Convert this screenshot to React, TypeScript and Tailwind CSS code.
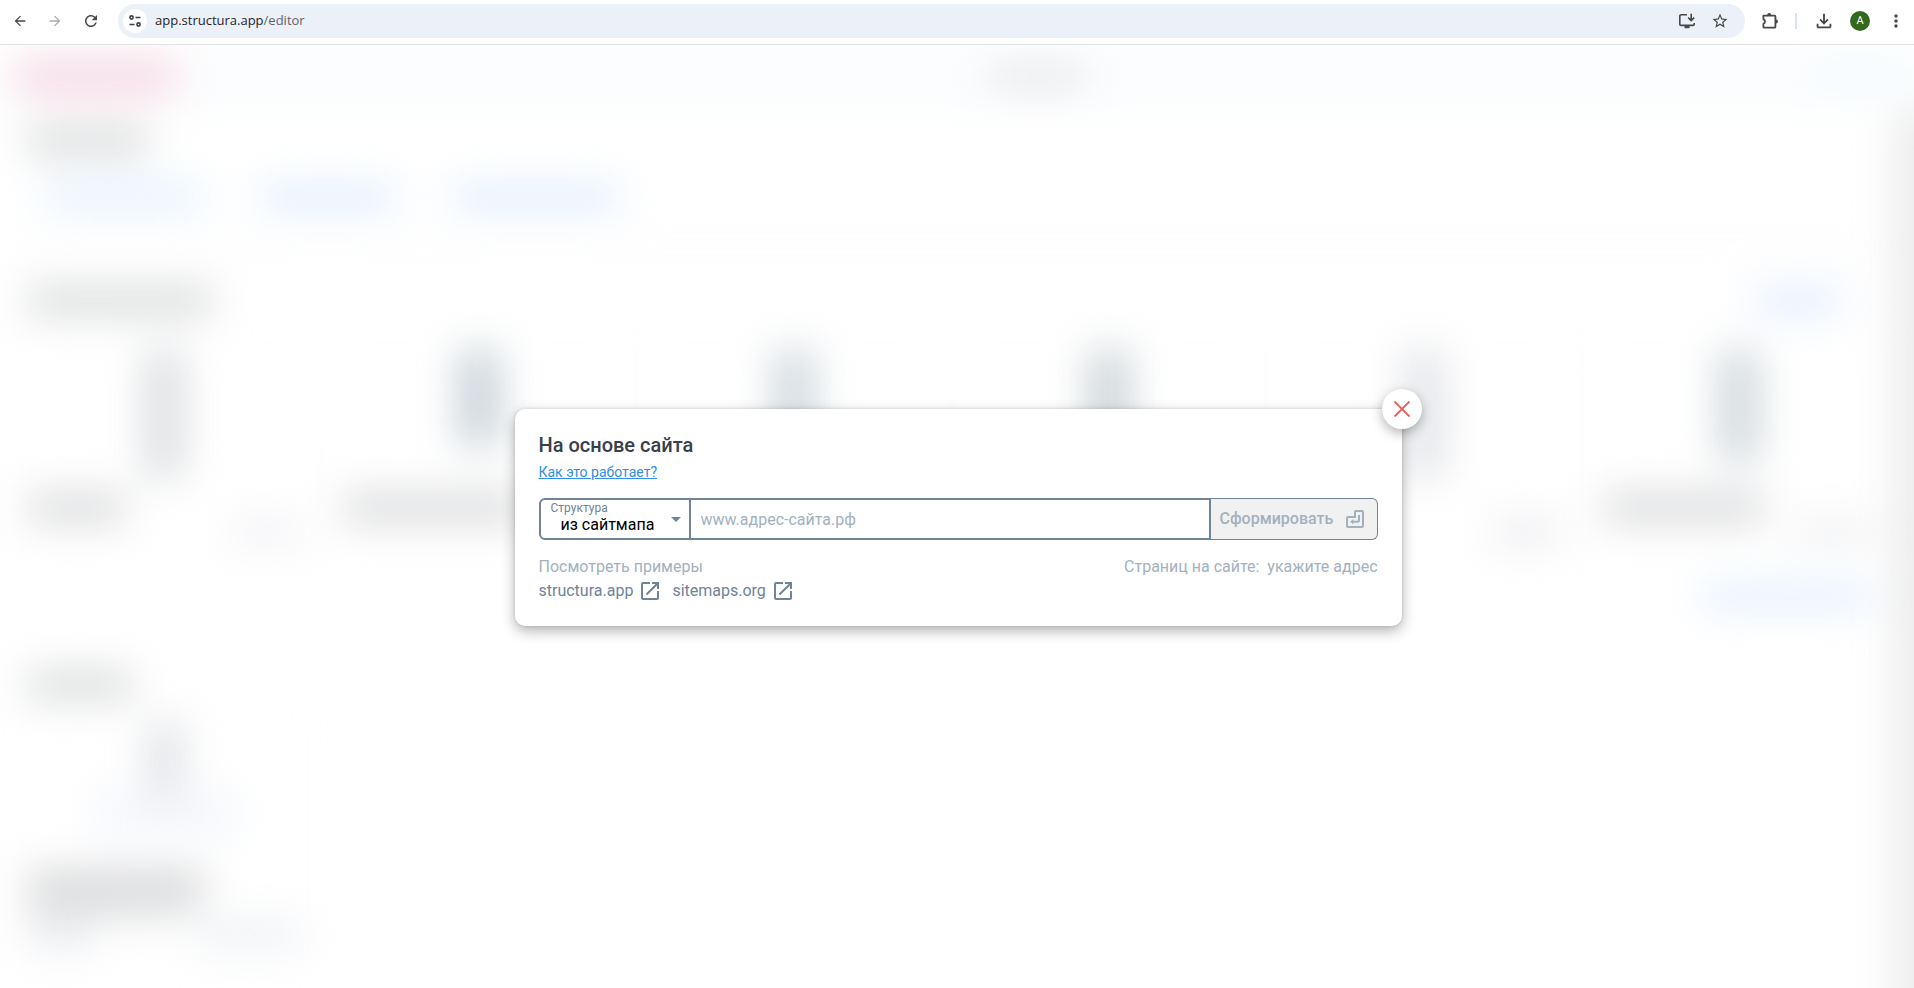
import React, { useState } from 'react';
import {
  MdArrowBack,
  MdArrowForward,
  MdMoreVert,
  MdOpenInNew,
  MdOutlineFileDownload,
  MdRefresh,
  MdStarBorder,
} from 'react-icons/md';

const EXAMPLES = [
  { name: 'structura.app', url: '#structura' },
  { name: 'sitemaps.org', url: '#sitemaps' },
];

// Project previews behind the dialog: tree, title and date placeholders
const PROJECTS = [
  { tree: 'h-32 bg-[#dcdee1]', title: 'w-24 bg-[#d6d7d9]', date: 'w-16 bg-[#ebecf1]' },
  { tree: 'h-24 bg-[#c6cfd5]', title: 'w-44 bg-[#d6d7d9]', date: 'w-16 bg-[#ebecf1]' },
  { tree: 'h-32 bg-[#cfd7dc]', title: 'w-32 bg-[#d6d7d9]', date: 'w-16 bg-[#ebecf1]' },
  { tree: 'h-32 bg-[#cbd2d6]', title: 'w-32 bg-[#d6d7d9]', date: 'w-16 bg-[#ebecf1]' },
  { tree: 'h-32 bg-[#e2e4e8]', title: 'w-24 bg-[#ffffff]', date: 'w-16 bg-[#e5e6ea]' },
  { tree: 'h-28 bg-[#d0d7db]', title: 'w-40 bg-[#d6d7d9]', date: 'w-20 bg-[#ebecef]' },
];

const TuneIcon: React.FC = () => (
  <svg width="14" height="14" viewBox="0 0 14 14" fill="none" stroke="#3c4043" strokeWidth="1.6">
    <circle cx="3.5" cy="3.5" r="1.6" />
    <path d="M7.5 3.5h5M1.5 10.5h5" />
    <circle cx="10.5" cy="10.5" r="1.6" />
  </svg>
);

const InstallIcon: React.FC = () => (
  <svg width="18" height="18" viewBox="0 0 18 18" fill="none" stroke="#474747" strokeWidth="1.6">
    <path d="M9 2.8H3a1.2 1.2 0 0 0-1.2 1.2v8.2A1.2 1.2 0 0 0 3 13.4h12a1.2 1.2 0 0 0 1.2-1.2V11" />
    <path d="M6.5 15h5" strokeWidth="2.4" />
    <path d="M13.2 1.8v6.4M10.2 5.6l3 3 3-3" />
  </svg>
);

const ExtensionIcon: React.FC = () => (
  <svg width="18" height="18" viewBox="0 0 18 18" fill="none" stroke="#474747" strokeWidth="1.8">
    <path
      d="M2.4 3.6h11.2a.8.8 0 0 1 .8.8v10.4a.8.8 0 0 1-.8.8H3.2a.8.8 0 0 1-.8-.8v-3a2.3 2.3 0 0 0 0-4.4z"
      strokeLinejoin="round"
    />
    <path d="M6.2 3a2 2 0 0 1 4 0zM15 7.4a2 2 0 0 1 0 4z" fill="#474747" stroke="none" />
  </svg>
);

const EnterIcon: React.FC = () => (
  <svg width="18" height="18" viewBox="0 0 18 18" fill="none" stroke="#a3b1bf" strokeWidth="2">
    <path d="M10 1h6a1 1 0 0 1 1 1v14a1 1 0 0 1-1 1H2a1 1 0 0 1-1-1V8a1 1 0 0 1 1-1h7V2a1 1 0 0 1 1-1z" />
    <path d="M13 5v5.5a1.3 1.3 0 0 1-1.3 1.3H6" />
    <path d="M7.4 9v5.6L4 11.8z" fill="#a3b1bf" stroke="none" />
  </svg>
);

const BrowserBar: React.FC = () => (
  <header className="flex h-[45px] items-center border-b border-[#dfe1e1] bg-white pr-2 pb-0.5 pl-3 text-[#474747]">
    <div className="mr-[18px] flex items-center gap-[19px]">
      <button aria-label="Back">
        <MdArrowBack size={16} />
      </button>
      <button aria-label="Forward" className="text-[#aaaaaa]">
        <MdArrowForward size={16} />
      </button>
      <button aria-label="Reload">
        <MdRefresh size={18} />
      </button>
    </div>
    <div className="flex h-[34px] flex-1 items-center rounded-full bg-[#ecf0f9] pr-4 pl-[5px]">
      <button
        aria-label="Site information"
        className="flex size-6 items-center justify-center rounded-full bg-white"
      >
        <TuneIcon />
      </button>
      <input
        aria-label="Address"
        className="sr-only"
        readOnly
        value="app.structura.app/editor"
      />
      <p className="ml-2 flex-1 font-['Open_Sans',sans-serif] text-[13px] text-[#1f1f1f]">
        app.structura.app<span className="text-[#5f6368]">/editor</span>
      </p>
      <div className="flex items-center gap-[15px]">
        <button aria-label="Install app">
          <InstallIcon />
        </button>
        <button aria-label="Bookmark">
          <MdStarBorder size={18} />
        </button>
      </div>
    </div>
    <div className="ml-4 flex items-center">
      <button aria-label="Extensions">
        <ExtensionIcon />
      </button>
      <span className="mx-4 h-4 w-0.5 bg-[#d3e3fd]" />
      <button aria-label="Downloads">
        <MdOutlineFileDownload size={22} />
      </button>
      <button
        aria-label="Profile"
        className="mr-4 ml-[15px] flex size-5 items-center justify-center rounded-full bg-[#33691e] font-['Roboto',sans-serif] text-[11px] text-white"
      >
        A
      </button>
      <button aria-label="Menu">
        <MdMoreVert size={20} />
      </button>
    </div>
  </header>
);

// The scrollbar column runs past the right edge so that the blur does not fade it out
const EditorPage: React.FC = () => (
  <div aria-hidden="true" className="h-full overflow-hidden bg-white">
    <div className="-mr-12 flex h-[calc(100%+48px)] flex-col blur-[20px]">
      <div className="flex h-16 shrink-0 items-center justify-between bg-[#fbfdfe] pr-16 pl-4">
        <div className="h-7 w-40 bg-[#f5cfdd]" />
        <div className="ml-20 h-6 w-24 bg-[#e5e5e9]" />
        <div className="h-5 w-20 bg-[#f1f9ff]" />
      </div>
      <div className="flex min-h-0 flex-1">
        <div className="flex-1 pr-1 pl-3">
          <div className="h-[136px] border-b-2 border-[#eeeeee] px-4 pt-5">
            <div className="h-6 w-30 bg-[#d0d2d3]" />
            <div className="mt-8 flex gap-14 pl-4">
              <div className="h-6 w-40 bg-[#e2effb]" />
              <div className="h-6 w-34 bg-[#deebfd]" />
              <div className="h-6 w-42 bg-[#deebfd]" />
            </div>
          </div>
          <div className="mt-11 flex items-center justify-between pr-12 pl-4">
            <div className="h-6 w-46 bg-[#d0d2d3]" />
            <div className="h-6 w-22 bg-[#dfeafe]" />
          </div>
          <div className="mt-5 grid grid-cols-6 gap-3">
            {PROJECTS.map((project, index) => (
              <div key={index} className="h-[232px] border border-[#f6f8f8]">
                <div className="flex h-40 justify-center pt-4">
                  <div className={`w-10 ${project.tree}`} />
                </div>
                <div className="px-4">
                  <div className={`h-7 ${project.title}`} />
                  <div className={`ml-auto h-5 ${project.date}`} />
                </div>
              </div>
            ))}
          </div>
          <div className="mt-5 flex justify-end pr-5">
            <div className="h-6 w-42 bg-[#e1eefd]" />
          </div>
          <div className="mt-16 ml-4 h-6 w-26 bg-[#d0d2d3]" />
          <div className="mt-4 h-[260px] w-[306px] border border-[#f6f8f8] px-4 pt-2">
            <div className="mx-auto h-18 w-9 bg-[#e0e2e6]" />
            <div className="mx-auto h-10 w-36 bg-[#f3f6fb]" />
            <div className="mt-9 h-8 w-44 bg-[#d6d7d9]" />
            <div className="h-5 w-40 bg-[#e9eaea]" />
            <div className="flex justify-between">
              <div className="h-6 w-16 bg-[#e9ebf0]" />
              <div className="h-6 w-26 bg-[#ebeef2]" />
            </div>
          </div>
        </div>
        <div className="w-17 bg-[#ececec]" />
      </div>
    </div>
  </div>
);

const SiteDialog: React.FC = () => {
  const [source, setSource] = useState('sitemap');
  const [address, setAddress] = useState('');

  return (
    <section
      role="dialog"
      aria-labelledby="dialog-title"
      className="relative w-[887px] rounded-[10px] bg-white px-6 pt-6 pb-[23px] shadow-[0_5px_14px_rgba(0,0,0,0.3),0_0_3px_rgba(0,0,0,0.15)]"
    >
      <button
        aria-label="Закрыть"
        className="absolute -top-5 -right-5 flex size-10 items-center justify-center rounded-full bg-white shadow-[0_4px_12px_rgba(0,0,0,0.3)]"
      >
        <svg width="16" height="16" viewBox="0 0 16 16" stroke="#f05454" strokeWidth="1.8">
          <path d="M.5.5l15 15M15.5.5l-15 15" />
        </svg>
      </button>
      <h1 id="dialog-title" className="text-xl leading-6 font-medium text-[#37414b]">
        На основе сайта
      </h1>
      <a href="#help" className="mt-[5px] block w-fit text-sm leading-5 text-[#2f8fe8] underline">
        Как это работает?
      </a>
      <form className="mt-4 flex h-[42px]" onSubmit={(event) => event.preventDefault()}>
        <div className="relative w-[152px] rounded-l-md border-2 border-[#708399]">
          <label
            htmlFor="source"
            className="absolute top-0 left-2.5 text-xs leading-4 text-[#708399]"
          >
            Структура
          </label>
          <select
            id="source"
            className="h-full w-full appearance-none bg-transparent pt-3 pl-5 leading-5 text-black outline-none"
            value={source}
            onChange={(event) => setSource(event.target.value)}
          >
            <option value="sitemap">из сайтмапа</option>
          </select>
          <svg
            className="pointer-events-none absolute top-[17px] right-2"
            width="10"
            height="5"
            viewBox="0 0 10 5"
          >
            <path d="M0 0h10L5 5z" fill="#708399" />
          </svg>
        </div>
        <input
          aria-label="Адрес сайта"
          className="min-w-0 flex-1 border-y-2 border-r-2 border-[#708399] px-2.5 pt-0.5 text-black outline-none placeholder:text-[#a3b1bf]"
          placeholder="www.адрес-сайта.рф"
          value={address}
          onChange={(event) => setAddress(event.target.value)}
        />
        <button
          disabled
          className="flex w-[167px] items-center justify-between rounded-r-md border border-l-0 border-[#708399] bg-[#f1f1f1] pr-[13px] pl-[9px] font-medium text-[#a3b1bf]"
        >
          Сформировать
          <EnterIcon />
        </button>
      </form>
      <div className="mt-[15px] flex justify-between leading-6 text-[#a3b1bf]">
        <p>Посмотреть примеры</p>
        <p>
          Страниц на сайте: <span className="ml-1">укажите адрес</span>
        </p>
      </div>
      <div className="flex gap-2.5 leading-6 text-[#708399]">
        {EXAMPLES.map((example) => (
          <a key={example.name} href={example.url} className="flex items-center gap-[5px]">
            {example.name}
            <MdOpenInNew size={24} />
          </a>
        ))}
      </div>
    </section>
  );
};

const App: React.FC = () => (
  <div className="flex h-screen flex-col font-['Roboto',sans-serif] text-base">
    <BrowserBar />
    <main className="relative min-h-0 flex-1">
      <EditorPage />
      <div className="absolute inset-0 flex items-center justify-center pt-0.5 pl-0.5">
        <SiteDialog />
      </div>
    </main>
  </div>
);

export default App;
